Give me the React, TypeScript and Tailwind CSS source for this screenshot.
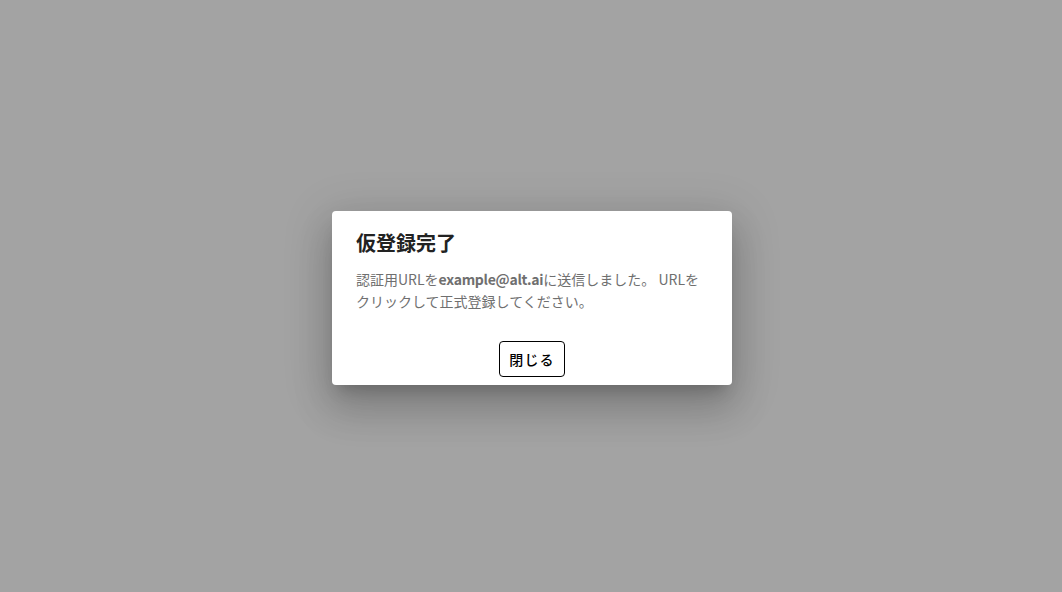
export default function App() {
  return (
    <div
      className="w-[1062px] h-[592px] bg-[#a3a3a3] flex items-center justify-center pl-[2px] pt-[4px]"
      style={{ fontFamily: '"Noto Sans CJK JP", "Noto Sans", sans-serif' }}
    >
      <div className="w-[400px] h-[174px] bg-white rounded-[4px] flex flex-col shadow-[0px_11px_15px_-7px_rgba(0,0,0,0.2),0px_24px_38px_3px_rgba(0,0,0,0.14),0px_9px_46px_8px_rgba(0,0,0,0.12)]">
        <h2 className="px-6 pt-4 pb-[9px] text-[20px] leading-[32px] font-semibold text-[#222222]">
          仮登録完了
        </h2>
        <div className="px-6 pb-[21px]">
          <p className="text-[14px] leading-[22px] text-[#6f6f6f]">
            認証用URLを<span className="font-semibold tracking-[-0.02em]">example@alt.ai</span>に送信しました。 URLをクリックして正式登録してください。
          </p>
        </div>
        <div className="px-2 pt-2 pb-[7px] flex justify-center">
          <button className="h-[36px] px-[9px] border border-black rounded-[4px] text-[14px] font-medium text-black tracking-[0.08em]">
            閉じる
          </button>
        </div>
      </div>
    </div>
  );
}
